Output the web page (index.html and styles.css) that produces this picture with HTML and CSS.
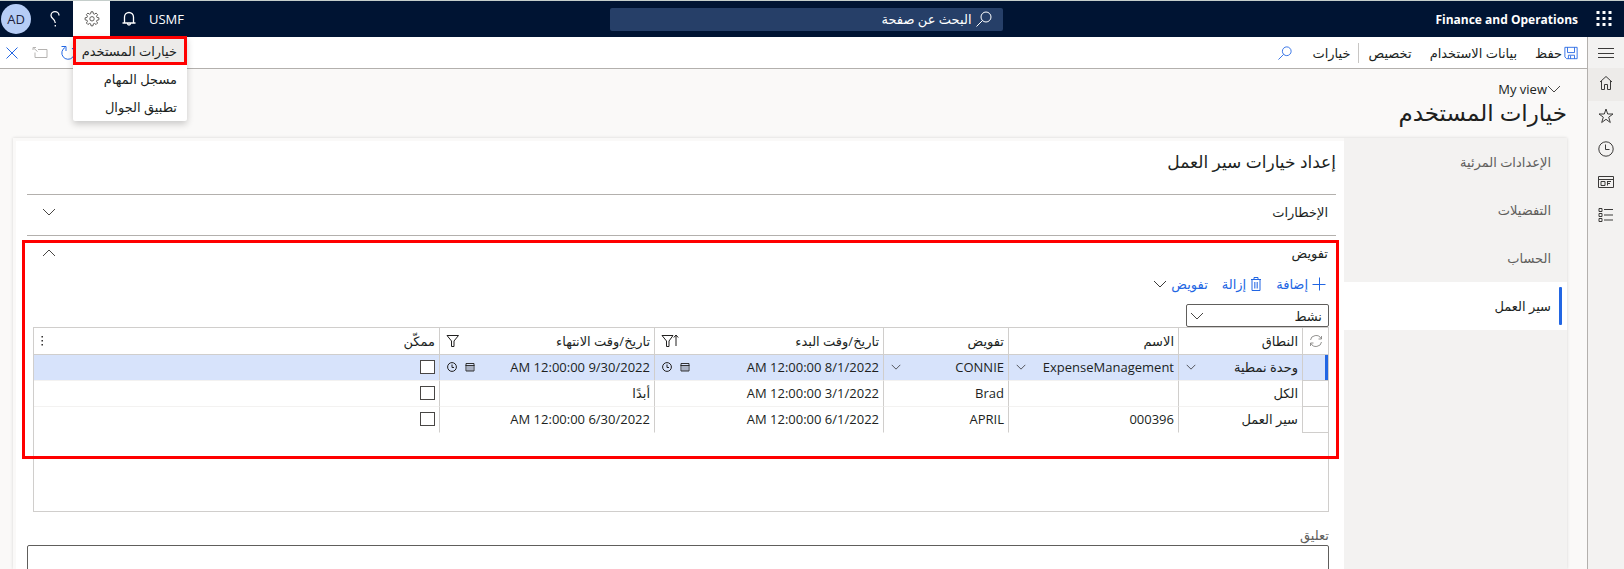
FILE: index.html
```html
<!DOCTYPE html>
<html lang="ar" dir="rtl">
<head>
<meta charset="utf-8">
<title>خيارات المستخدم - Finance and Operations</title>
<link rel="stylesheet" href="styles.css">
</head>
<body>
<svg class="sprite" aria-hidden="true">
  <symbol id="chevron" viewBox="0 0 14 8"><path d="M1 1l6 6 6-6"/></symbol>
  <symbol id="search" viewBox="0 0 16 16"><circle cx="10" cy="6" r="5"/><path d="M6.500 9.500L0.500 15.500"/></symbol>
  <symbol id="calendar" viewBox="0 0 10 10"><path d="M1 1.500h8v7.500h-8zM.5 3.500h9" stroke-width=".9"/><path d="M3 4v5M5 4v5M7 4v5" stroke-width=".5"/></symbol>
  <symbol id="clock" viewBox="0 0 16 16"><circle cx="8" cy="8" r="7.200"/><path d="M7.500 3.500v5h4"/></symbol>
  <symbol id="clock-small" viewBox="0 0 10 10"><circle cx="5" cy="5" r="4.400"/><path d="M5 2.500v3h2"/></symbol>
  <symbol id="filter" viewBox="0 0 14 14"><path d="M1 1.500h11.500L8 7v5.500H5.500V7z"/></symbol>
</svg>
<div class="app">
  <header class="topbar">
    <div class="brand">
      <button class="bare" aria-label="قائمة التطبيقات"><svg class="waffle" viewBox="0 0 16 16"><path d="M0.500 0h3v3h-3zM6.500 0h3v3h-3zM12.500 0h3v3h-3zM0.500 6h3v3h-3zM6.500 6h3v3h-3zM12.500 6h3v3h-3zM0.500 12h3v3h-3zM6.500 12h3v3h-3zM12.500 12h3v3h-3z"/></svg></button>
      <span class="product">Finance and Operations</span>
    </div>
    <label class="finder"><svg class="icon16"><use href="#search"/></svg><input type="search" placeholder="البحث عن صفحة" aria-label="البحث عن صفحة"></label>
    <div class="tools">
      <span class="company">USMF</span>
      <button class="tool" aria-label="الإشعارات"><svg class="icon16" viewBox="0 0 16 16"><path d="M3.500 11.500V6a4.500 4.500 0 0 1 9 0v5.500M1.500 12h13M6.500 12.500a1.500 1.500 0 0 0 3 0" stroke-width="1.300"/></svg></button>
      <div class="settings">
        <button class="tool tool-open" aria-label="الإعدادات"><svg class="icon16" viewBox="0 0 16 16"><path d="M7 .8h2l.4 2 1 .4 1.700-1.100 1.500 1.500-1.100 1.700.4 1 2 .5v2l-2 .5-.4 1 1.100 1.700-1.500 1.500-1.700-1.100-1 .4-.4 2H7l-.4-2-1-.4-1.700 1.100-1.500-1.500 1.100-1.700-.4-1-2-.5v-2l2-.5.4-1L2.400 3.600l1.500-1.500 1.700 1.100 1-.4z"/><circle cx="8" cy="7.800" r="2.200"/></svg></button>
        <div class="menu" role="menu">
          <button role="menuitem" class="menu-item marked">خيارات المستخدم</button>
          <button role="menuitem" class="menu-item">مسجل المهام</button>
          <button role="menuitem" class="menu-item">تطبيق الجوال</button>
        </div>
      </div>
      <button class="tool" aria-label="تعليمات"><svg class="icon16" viewBox="0 0 16 16"><path d="M12 4.500A4 3.800 0 0 0 4 4.500C4 8 8.300 7.500 8.300 12M8.300 14v1.500" stroke-width="1.300"/></svg></button>
      <span class="avatar">AD</span>
    </div>
  </header>
  <div class="frame">
    <nav class="rail">
      <button class="toggle" aria-label="القائمة"><svg class="icon16" viewBox="0 0 16 16"><path d="M0 3.500h16M0 8.500h16M0 12.500h16"/></svg></button>
      <button class="current" aria-label="الصفحة الرئيسية"><svg class="icon16" viewBox="0 0 16 16"><path d="M2 7L8 1.500 14 7M3.500 6v8.500h3v-5h3v5h3V6"/></svg></button>
      <button aria-label="المفضلة"><svg class="icon16" viewBox="0 0 16 16"><path d="M8 1l1.700 5h5.300l-4.300 3.200L12.300 14.500 8 11.300 3.700 14.500l1.600-5.300L1 6h5.300z"/></svg></button>
      <button aria-label="الأخيرة"><svg class="icon16"><use href="#clock"/></svg></button>
      <button aria-label="مساحات العمل"><svg class="icon16" viewBox="0 0 16 16"><path d="M.5 2.500h15v11H.5zM.5 5.500h15M3 7.500h4v4H3zM9 7.500h4M9 9.500h3M9.500 7.500v4"/></svg></button>
      <button aria-label="الوحدات النمطية"><svg class="icon16" viewBox="0 0 16 16"><path d="M1 1.500h3v3H1zM1 6.500h3v3H1zM1 11.500h3v3H1zM6 2.500h9M6 8h9M6 13h9"/></svg></button>
    </nav>
    <div class="page">
      <div class="commands">
        <button class="cmd save"><svg class="icon14 blue" viewBox="0 0 16 16"><path d="M1 1.500h14v13H3l-2-2zM4 1.500v6h8v-6M5 14.500v-4h7v4M7.500 11v3.500"/></svg>حفظ</button>
        <button class="cmd">بيانات الاستخدام</button>
        <button class="cmd">تخصيص</button>
        <button class="cmd options">خيارات</button>
        <button class="cmd" aria-label="بحث"><svg class="icon14 blue"><use href="#search"/></svg></button>
        <div class="window-tools">
          <button class="bare" aria-label="تحديث"><svg class="icon16 blue" viewBox="0 0 16 16"><path d="M12 3A6.300 6.300 0 1 1 5 2.500M1.500 1.500H6v4.500"/></svg></button>
          <button class="bare" aria-label="فتح في نافذة جديدة"><svg class="icon16 faded" viewBox="0 0 16 16"><path d="M6 4.500h9v8H3v-5M1 5V2.500h3M1.500 3l4 3.500"/></svg></button>
          <button class="bare" aria-label="إغلاق"><svg class="icon16 blue" viewBox="0 0 16 16"><path d="M2.500 2.500l11 11M13.500 2.500l-11 11"/></svg></button>
        </div>
      </div>
      <main class="content">
        <button class="view"><svg class="chev"><use href="#chevron"/></svg>My view</button>
        <h1>خيارات المستخدم</h1>
        <div class="panel">
          <nav class="tabs">
            <a href="#visual">الإعدادات المرئية</a>
            <a href="#preferences">التفضيلات</a>
            <a href="#account">الحساب</a>
            <a href="#workflow" class="active">سير العمل</a>
          </nav>
          <section class="sheet">
            <h2>إعداد خيارات سير العمل</h2>
            <button class="group-head"><span>الإخطارات</span><svg class="chev"><use href="#chevron"/></svg></button>
            <div class="delegation">
              <button class="group-head"><span>تفويض</span><svg class="chev up"><use href="#chevron"/></svg></button>
              <div class="actions">
                <button class="bare"><svg class="icon14" viewBox="0 0 14 14"><path d="M7.500 .5v13M.5 7.500h13"/></svg>إضافة</button>
                <button class="bare"><svg class="icon14 bin" viewBox="0 0 12 14"><path d="M1 2.500h10M4 2V.5h4V2M2 3v10.500h8V3"/><path d="M4.500 5v6.500M6 5v6.500M7.500 5v6.500" stroke-width=".7"/></svg>إزالة</button>
                <button class="bare">تفويض<svg class="chev"><use href="#chevron"/></svg></button>
              </div>
              <div class="picker"><select aria-label="الحالة"><option>نشط</option></select><svg class="chev"><use href="#chevron"/></svg></div>
              <div class="grid">
                <table>
                  <colgroup><col class="c-mark"><col class="c-scope"><col class="c-name"><col class="c-delegate"><col class="c-start"><col class="c-end"><col></colgroup>
                  <thead><tr>
                    <th class="mark"><svg class="icon14 refresh" viewBox="0 0 14 14"><path d="M1.500 6A5.500 5 0 0 1 12 4.500M12.500 2v3H9.500M12.500 8A5.500 5 0 0 1 2 9.500M1.500 12V9H4.500" stroke-width=".8"/></svg></th>
                    <th>النطاق</th><th>الاسم</th><th>تفويض</th>
                    <th><div class="cell"><span class="grow">تاريخ/وقت البدء</span><svg class="sort" viewBox="0 0 18 14"><path d="M1 1.500h11L8 7v5.500H5.500V7zM15 12V1.500M12.800 3.500L15 1l2.200 2.500"/></svg></div></th>
                    <th><div class="cell"><span class="grow">تاريخ/وقت الانتهاء</span><svg class="icon14"><use href="#filter"/></svg></div></th>
                    <th><div class="cell"><span class="grow">ممكّن</span><svg class="more" viewBox="0 0 4 12"><path d="M1.500 1h1.400v1.400H1.500zM1.500 5h1.400v1.400H1.500zM1.500 9h1.400v1.400H1.500z"/></svg></div></th>
                  </tr></thead>
                  <tbody>
                    <tr class="selected">
                      <td></td>
                      <td><div class="cell"><select aria-label="النطاق"><option>وحدة نمطية</option></select><svg class="small-chev"><use href="#chevron"/></svg></div></td>
                      <td><div class="cell"><select aria-label="الاسم"><option>ExpenseManagement</option></select><svg class="small-chev"><use href="#chevron"/></svg></div></td>
                      <td><div class="cell"><select aria-label="تفويض"><option>CONNIE</option></select><svg class="small-chev"><use href="#chevron"/></svg></div></td>
                      <td><div class="cell pair"><input type="text" aria-label="تاريخ البدء" value="8/1/2022 12:00:00 AM"><svg class="icon10"><use href="#calendar"/></svg><svg class="icon10"><use href="#clock-small"/></svg></div></td>
                      <td><div class="cell pair"><input type="text" aria-label="تاريخ الانتهاء" value="9/30/2022 12:00:00 AM"><svg class="icon10"><use href="#calendar"/></svg><svg class="icon10"><use href="#clock-small"/></svg></div></td>
                      <td><input type="checkbox" aria-label="ممكّن"></td>
                    </tr>
                    <tr><td></td><td>الكل</td><td></td><td>Brad</td><td>3/1/2022 12:00:00 AM</td><td>أبدًا</td><td><input type="checkbox" aria-label="ممكّن"></td></tr>
                    <tr><td></td><td>سير العمل</td><td>000396</td><td>APRIL</td><td>6/1/2022 12:00:00 AM</td><td>6/30/2022 12:00:00 AM</td><td><input type="checkbox" aria-label="ممكّن"></td></tr>
                  </tbody>
                </table>
              </div>
              <div class="callout"></div>
            </div>
            <label class="comment-label" for="comment">تعليق</label>
            <textarea id="comment"></textarea>
          </section>
        </div>
      </main>
    </div>
  </div>
</div>
</body>
</html>
```
FILE: styles.css
```css
* { box-sizing: border-box; }
body, button, input, select, textarea {
  font-family: "Open Sans", "Noto Sans", "DejaVu Sans", sans-serif;
  font-size: 13px;
  color: #201f1e;
}
body { margin: 0; }
button { background: none; border: 0; padding: 0; white-space: nowrap; }
svg { fill: none; stroke: currentColor; flex: none; }
.sprite { display: none; }
.icon16 { width: 16px; height: 16px; }
.icon14 { width: 14px; height: 14px; }
.icon10 { width: 10px; height: 10px; }
.chev { width: 14px; height: 8px; color: #484644; }
.small-chev { width: 10px; height: 6px; }
.bin { width: 12px; }
.blue { color: #2266e3; }
.faded { color: #b5b3b1; }
.bare { display: flex; align-items: center; }

.app { display: flex; flex-direction: column; height: 100vh; overflow: hidden; }

.topbar {
  display: grid;
  grid-template-columns: 1fr 393px 1fr;
  align-items: center;
  flex: none;
  height: 37px;
  padding-right: 12px;
  border-top: 1px solid #c5cecb;
  background: #001433;
  color: #fff;
}
.brand { display: flex; align-items: center; gap: 18px; }
.waffle { width: 16px; height: 16px; fill: #fff; stroke: none; }
.product { font-size: 12px; font-weight: 700; }
.finder {
  display: flex;
  align-items: center;
  gap: 4px;
  height: 23px;
  padding: 0 11px;
  border-radius: 2px;
  background: #263f68;
}
.finder input { flex: 1; min-width: 0; padding: 0; border: 0; outline: 0; background: none; color: #fff; }
.finder input::placeholder { color: #fff; opacity: 1; }
.tools { display: flex; align-items: center; justify-content: flex-end; height: 100%; }
.company { padding-left: 2px; }
.tool { display: flex; align-items: center; justify-content: center; width: 37px; height: 36px; color: #fff; }
.tool-open { background: #fff; color: #605e5c; }
.avatar {
  width: 30px;
  height: 30px;
  margin: 0 5px 0 1px;
  border-radius: 50%;
  background: #b6cdf6;
  color: #201f3e;
  line-height: 30px;
  text-align: center;
}
.settings { position: relative; }
.menu {
  position: absolute;
  z-index: 5;
  top: 35px;
  left: 0;
  width: 114px;
  background: #fff;
  border-radius: 0 0 2px 2px;
  box-shadow: 0 3px 7px rgba(0, 0, 0, 0.2);
}
.menu-item { display: block; width: 100%; height: 28px; padding: 0 10px; text-align: right; }
.marked { height: 29px; padding: 0 7px; border: 3px solid #f00; background: #edebe9; }

.frame { display: flex; flex: 1; min-height: 0; }
.rail { flex: none; width: 37px; background: #f3f2f1; border-left: 1px solid #b3b0ad; }
.rail button { display: flex; align-items: center; justify-content: center; width: 100%; height: 33px; padding: 0 0 3px; color: #3b3a39; }
.rail .toggle { height: 31px; padding-bottom: 0; }
.rail .current { background: #edebe9; }
.page { display: flex; flex-direction: column; flex: 1; min-width: 0; }

.commands {
  display: flex;
  align-items: center;
  flex: none;
  height: 32px;
  padding-right: 9px;
  border-bottom: 1px solid #b3b0ad;
  background: #fff;
}
.cmd { display: flex; align-items: center; gap: 2px; margin-left: 18px; height: 20px; }
.options { margin-left: 20px; margin-right: -9px; padding-right: 8px; border-right: 1px solid #c8c6c4; font-weight: 500; }
.window-tools { display: flex; gap: 12px; margin-right: auto; padding-left: 4px; }

.content { display: flex; flex-direction: column; flex: 1; min-height: 0; padding: 11px 20px 0 13px; background: #faf9f8; }
.view { display: flex; align-items: center; align-self: flex-start; height: 18px; margin-right: 6px; }
h1 { margin: 0; height: 34px; font-size: 23px; font-weight: 500; line-height: 28px; }
.panel { display: flex; flex: 1; min-height: 0; margin-top: 6px; box-shadow: 0 0 3px rgba(0, 0, 0, 0.15); }
.tabs { flex: none; width: 223px; background: #f3f2f1; }
.tabs a { display: block; height: 48px; padding-right: 16px; line-height: 49px; color: #605e5c; text-decoration: none; }
.tabs .active { position: relative; background: #fff; color: #201f1e; }
.active::before { content: ""; position: absolute; top: 5px; right: 5px; width: 3px; height: 38px; border-radius: 1px; background: #2266e3; }
.sheet {
  flex: 1;
  min-width: 0;
  padding: 0 8px 0 11px;
  border: solid #faf9f8;
  border-width: 3px 0 0 3px;
  background: #fff;
}
h2 { margin: 0; height: 53px; font-size: 17px; font-weight: 500; line-height: 42px; }
.group-head {
  display: flex;
  align-items: center;
  justify-content: space-between;
  width: 100%;
  height: 41px;
  padding: 0 8px 6px 15px;
  border-top: 1px solid #b3b0ad;
  font-weight: 500;
}
.up { transform: rotate(180deg); }
.delegation { position: relative; padding: 0 7px 0 6px; }
.delegation > .group-head { width: auto; min-width: calc(100% + 13px); height: 37px; margin: 0 -7px 0 -6px; padding-bottom: 2px; }
.actions { display: flex; gap: 14px; height: 23px; padding-right: 3px; }
.actions .bare { gap: 4px; color: #2266e3; }
.actions .chev { color: #3b3a39; }
.picker {
  display: flex;
  align-items: center;
  width: 143px;
  height: 23px;
  margin-top: 9px;
  padding: 0 6px 0 3px;
  border: 1px solid #605e5c;
  border-radius: 2px;
}
select, .cell input { flex: 1; min-width: 0; padding: 0; border: 0; outline: 0; background: none; appearance: none; }
.grid { min-height: 185px; border: 1px solid #d0cecc; }
table { width: 100%; table-layout: fixed; border-collapse: separate; border-spacing: 0; }
.c-mark { width: 26px; }
.c-scope { width: 124px; }
.c-name { width: 170px; }
.c-delegate { width: 125px; }
.c-start { width: 229px; }
.c-end { width: 215px; }
th { height: 27px; padding: 0 4px 0 6px; border-bottom: 1px solid #d0cecc; font-weight: 500; text-align: right; }
td { height: 26px; padding: 0 4px 2px 7px; border-bottom: 1px solid #f3f2f1; white-space: nowrap; }
th, td { border-left: 1px solid #d0cecc; }
th:last-child, td:last-child { border-left: 0; }
td:first-child { border-bottom-color: #d0cecc; }
tr:last-child td:not(:first-child) { border-bottom-color: #fff; }
.mark { padding: 0; }
.refresh { display: block; color: #797775; margin: auto; }
.cell { display: flex; align-items: center; }
.grow { flex: 1; }
.sort { width: 18px; height: 14px; }
.more { width: 4px; height: 12px; fill: #201f1e; stroke: none; }
.pair { gap: 8px; }
.selected { background: #d7e3fb; }
.selected td:first-child { box-shadow: inset -3px 0 #2266e3; }
input[type="checkbox"] {
  display: block;
  width: 15px;
  height: 14px;
  margin: 0;
  border: 1px solid #484644;
  background: #fff;
  appearance: none;
}
.callout { position: absolute; top: 5px; left: -5px; right: -3px; height: 219px; border: 3px solid #f00; pointer-events: none; }
.comment-label { display: block; margin-top: 14px; padding-right: 7px; height: 19px; color: #605e5c; }
textarea { display: block; width: calc(100% - 7px); height: 90px; margin-right: 7px; border: 1px solid #605e5c; border-radius: 2px; resize: none; }
```
